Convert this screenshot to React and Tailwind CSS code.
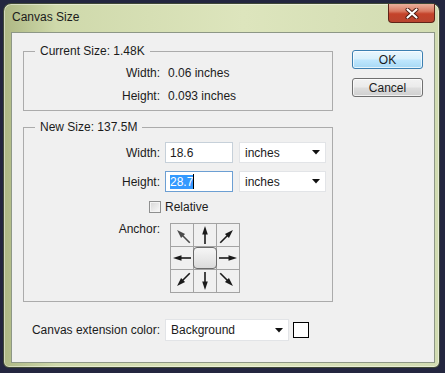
import React from "react";

// arrow drawn pointing up, rotated into place; shift pulls it toward the grid centre
const Arrow = ({ angle, shift = 0, color = "#1a1a1a" }) => (
  <svg width="22" height="22" viewBox="0 0 22 22">
    <g transform={`rotate(${angle} 11 11)`}>
      <line x1="11" y1={9 + shift} x2="11" y2={20 + shift} stroke={color} strokeWidth="1.6" />
      <polygon points={`11,${2 + shift} 8.2,${10.5 + shift} 13.8,${10.5 + shift}`} fill={color} />
    </g>
  </svg>
);

const Caret = () => (
  <svg width="8" height="5" viewBox="0 0 8 5">
    <polygon points="0,0 8,0 4,4.5" fill="#111" />
  </svg>
);

const Dropdown = ({ value, className }) => (
  <div className={`flex items-center justify-between bg-white border border-[#e2e4e7] pl-[5px] pr-[5px] ${className}`}>
    <span>{value}</span>
    <Caret />
  </div>
);

const cells = [
  { angle: -45, shift: 2, color: "#4a4a4a" },
  { angle: 0, shift: 0 },
  { angle: 45, shift: 2 },
  { angle: -90, shift: 0 },
  null,
  { angle: 90, shift: 0 },
  { angle: -135, shift: 2 },
  { angle: 180, shift: 0 },
  { angle: 135, shift: 2 },
];

export default function App() {
  return (
    <div className="w-[445px] h-[373px] overflow-hidden bg-[#23263f] pt-[3px] pl-[3px] font-['Liberation_Sans',Arial,sans-serif] text-[12px] leading-[14px] text-[#1b1b1b]">
      <div className="w-[437px] h-[365px] flex flex-col rounded-t-[8px] rounded-b-[6px] border border-[#3f4836] bg-[linear-gradient(90deg,#aeb884_0%,#cfd9ab_12%,#dde5bd_55%,#d2dcb2_100%)] shadow-[inset_0_0_0_1px_rgba(255,255,255,0.45)] pl-[7px] pr-[4px] pb-[4px]">
        {/* title bar */}
        <div className="h-[28px] flex justify-between items-start">
          <span className="mt-[6px] ml-[1px]">Canvas Size</span>
          <div className="w-[47px] h-[19px] flex items-center justify-center rounded-b-[4px] border border-t-0 border-[#5e2418] bg-[linear-gradient(180deg,#eab09c_0%,#d97a62_40%,#c4432a_55%,#b9452f_100%)]">
            <svg width="14" height="11" viewBox="0 0 14 11">
              <path d="M2.5 1.5 L11.5 9.5 M11.5 1.5 L2.5 9.5" stroke="#4a1a10" strokeWidth="4" strokeLinecap="round" />
              <path d="M2.5 1.5 L11.5 9.5 M11.5 1.5 L2.5 9.5" stroke="#ffffff" strokeWidth="2.2" strokeLinecap="round" />
            </svg>
          </div>
        </div>

        {/* client area */}
        <div className="flex-1 flex bg-[#f0f0f0] border border-[#8d9786]">
          <div className="pl-[11px] pt-[18px] flex flex-col">
            {/* current size */}
            <div className="relative w-[310px] h-[60px] border border-[#ababab]">
              <span className="absolute left-[11px] -top-[8px] px-[5px] bg-[#f0f0f0]">Current Size: 1.48K</span>
              <div className="grid grid-cols-[136px_auto] gap-x-[8px] gap-y-[9px] pt-[14px]">
                <span className="text-right">Width:</span>
                <span>0.06 inches</span>
                <span className="text-right">Height:</span>
                <span>0.093 inches</span>
              </div>
            </div>

            {/* new size */}
            <div className="relative mt-[16px] w-[310px] h-[175px] border border-[#ababab] pt-[14px]">
              <span className="absolute left-[11px] -top-[8px] px-[5px] bg-[#f0f0f0]">New Size: 137.5M</span>
              <div className="flex items-center">
                <span className="w-[136px] text-right">Width:</span>
                <div className="ml-[5px] w-[68px] h-[21px] flex items-center bg-white border border-[#c6d0d9] pl-[4px]">18.6</div>
                <Dropdown value="inches" className="ml-[6px] w-[87px] h-[21px]" />
              </div>
              <div className="flex items-center mt-[8px]">
                <span className="w-[136px] text-right">Height:</span>
                <div className="ml-[5px] w-[68px] h-[21px] flex items-center bg-white border border-[#6c9fd3] pl-[4px]">
                  <span className="bg-[#3399ff] text-white">28.7</span>
                  <span className="w-px h-[15px] bg-black" />
                </div>
                <Dropdown value="inches" className="ml-[6px] w-[87px] h-[21px]" />
              </div>
              <div className="flex items-center h-[14px] mt-[8px] pl-[125px]">
                <span className="w-[12px] h-[12px] border border-[#8e8f8f] bg-[linear-gradient(135deg,#d6d6d6,#fafafa)] shadow-[inset_0_0_0_1px_#f4f4f4]" />
                <span className="ml-[4px]">Relative</span>
              </div>
              <div className="flex items-start mt-[9px]">
                <span className="w-[136px] text-right -mt-px">Anchor:</span>
                <div className="ml-[10px] grid grid-cols-[22px_22px_22px] gap-px p-px bg-[#a3a3a3]">
                  {cells.map((c, i) =>
                    c ? (
                      <div key={i} className="w-[22px] h-[22px] bg-[#f0f0f0]">
                        <Arrow angle={c.angle} shift={c.shift} color={c.color} />
                      </div>
                    ) : (
                      <div key={i} className="w-[22px] h-[22px] bg-[#f0f0f0]">
                        <div className="w-[24px] h-[22px] -ml-px rounded-[4px] border border-[#6b6b6b] bg-[linear-gradient(180deg,#f6f6f6_0%,#e9e9e9_50%,#dadada_100%)]" />
                      </div>
                    )
                  )}
                </div>
              </div>
            </div>

            {/* extension colour */}
            <div className="mt-[17px] flex items-center h-[22px]">
              <span className="w-[137px] text-right">Canvas extension color:</span>
              <Dropdown value="Background" className="ml-[5px] w-[124px] h-[22px]" />
              <span className="ml-[4px] w-[16px] h-[16px] bg-white border border-black" />
            </div>
          </div>

          {/* buttons */}
          <div className="ml-[19px] pt-[17px] flex flex-col">
            <button className="w-[71px] h-[19px] rounded-[3px] border border-[#3c7fb1] bg-[linear-gradient(180deg,#eaf6fd_0%,#d9f0fc_45%,#bee6fd_55%,#a7d9f5_100%)] shadow-[inset_0_0_0_1px_rgba(255,255,255,0.7)] text-[12px] leading-[14px]">
              OK
            </button>
            <button className="mt-[9px] w-[71px] h-[19px] rounded-[3px] border border-[#707070] bg-[linear-gradient(180deg,#f2f2f2_0%,#ebebeb_45%,#dddddd_55%,#cfcfcf_100%)] shadow-[inset_0_0_0_1px_rgba(255,255,255,0.7)] text-[12px] leading-[14px]">
              Cancel
            </button>
          </div>
        </div>
      </div>
    </div>
  );
}
